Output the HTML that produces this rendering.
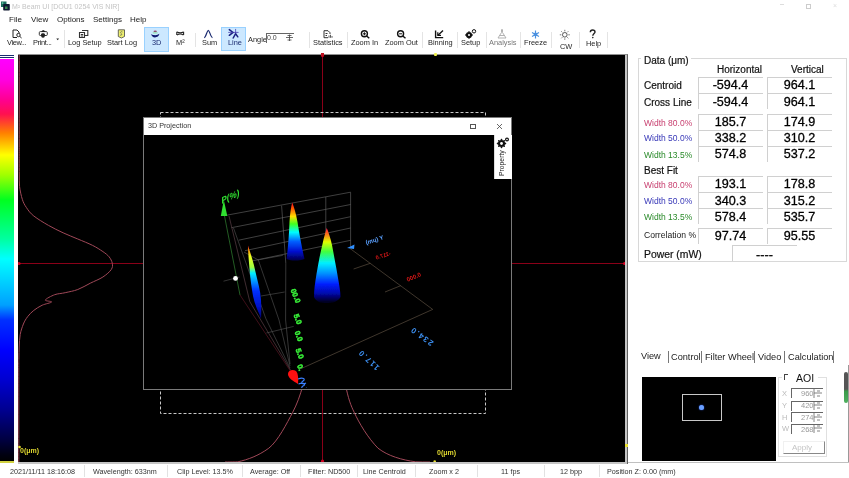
<!DOCTYPE html>
<html><head><meta charset="utf-8">
<style>
*{margin:0;padding:0;box-sizing:border-box}
html,body{width:849px;height:478px;overflow:hidden;background:#fff;font-family:"Liberation Sans",sans-serif;position:relative;color:#222}
.a{position:absolute;white-space:nowrap;line-height:1}
body>div{will-change:transform}
.tb{font-size:7.4px;color:#1e1e1e}
.sep{position:absolute;width:1px;background:#e4e4e4}
.mn{font-size:8px;color:#222;top:15.5px}
.sb{font-size:7.2px;color:#333;top:467.5px}
.ssep{position:absolute;top:465px;width:1px;height:12px;background:#e2e2e2}
.rl{font-size:10px;color:#111;-webkit-text-stroke:0.2px #111}
.cell{position:absolute;border-top:1px solid #d0d0d0;border-left:1px solid #d0d0d0;height:16px}
.val{font-size:12.6px;color:#000;-webkit-text-stroke:0.3px #000}
</style></head><body>

<!-- title bar -->
<svg class="a" style="left:0;top:0" width="12" height="12" viewBox="0 0 12 12">
 <rect x="1" y="1.5" width="5.5" height="5.5" fill="#1a6a5a"/><rect x="1.8" y="2.3" width="1.5" height="1.5" fill="#6ad0b0"/><rect x="4" y="4.5" width="1.5" height="1.5" fill="#6ad0b0"/>
 <rect x="3.2" y="4" width="6.6" height="6.5" rx="0.8" fill="#101830"/><rect x="5" y="6.5" width="2.5" height="2.5" fill="#3a8a50"/>
</svg>
<div class="a" style="left:12px;top:3px;font-size:7px;color:#c4c4c4">M² Beam UI  [DOU1 0254 VIS NIR]</div>
<div class="a" style="left:780px;top:4px;width:4px;height:1px;background:#ddd"></div>
<div class="a" style="left:806px;top:4px;width:5px;height:5px;border:1px solid #ccc"></div>
<div class="a" style="left:833px;top:2px;font-size:7px;color:#ddd">×</div>

<!-- menu -->
<div class="a mn" style="left:9px">File</div>
<div class="a mn" style="left:30.5px">View</div>
<div class="a mn" style="left:56.5px">Options</div>
<div class="a mn" style="left:93px">Settings</div>
<div class="a mn" style="left:129.5px">Help</div>

<!-- toolbar -->
<div class="a" style="left:143.5px;top:27px;width:24.5px;height:25px;background:#cce8ff;border:1px solid #99d1ff"></div>
<div class="a" style="left:221.2px;top:27.3px;width:24.8px;height:24px;background:#cce8ff;border:1px solid #99d1ff"></div>

<div class="a tb" style="left:7px;top:39.2px;letter-spacing:-0.35px">View...</div>
<div class="a tb" style="left:33.4px;top:39.2px;letter-spacing:-0.35px">Print...</div>
<div class="a tb" style="left:67.7px;top:39.2px">Log Setup</div>
<div class="a tb" style="left:106.7px;top:39.2px">Start Log</div>
<div class="a tb" style="left:151.6px;top:39.2px;color:#1a2a70">3D</div>
<div class="a tb" style="left:176px;top:39.2px">M²</div>
<div class="a tb" style="left:202px;top:39.2px">Sum</div>
<div class="a tb" style="left:227.8px;top:39.2px;color:#1a2a70">Line</div>
<div class="a tb" style="left:248.4px;top:36px">Angle</div>
<div class="a tb" style="left:313.4px;top:39.2px">Statistics</div>
<div class="a tb" style="left:351px;top:39.2px">Zoom In</div>
<div class="a tb" style="left:384.6px;top:39.2px">Zoom Out</div>
<div class="a tb" style="left:427.6px;top:39.2px">Binning</div>
<div class="a tb" style="left:461px;top:39.2px">Setup</div>
<div class="a tb" style="left:489px;top:39.2px;color:#777">Analysis</div>
<div class="a tb" style="left:524.4px;top:39.2px">Freeze</div>
<div class="a tb" style="left:559.6px;top:43px">CW</div>
<div class="a tb" style="left:586px;top:40px">Help</div>

<div class="sep" style="left:63.5px;top:30px;height:18px"></div>
<div class="sep" style="left:194.8px;top:33px;height:14px"></div>
<div class="sep" style="left:308.6px;top:32px;height:16px"></div>
<div class="sep" style="left:346.5px;top:32px;height:16px"></div>
<div class="sep" style="left:421.6px;top:32px;height:16px"></div>
<div class="sep" style="left:456.9px;top:32px;height:16px"></div>
<div class="sep" style="left:485.7px;top:32px;height:16px"></div>
<div class="sep" style="left:520px;top:32px;height:16px"></div>
<div class="sep" style="left:551px;top:32px;height:16px"></div>
<div class="sep" style="left:579.4px;top:32px;height:16px"></div>
<div class="sep" style="left:607.3px;top:32px;height:16px"></div>

<!-- angle spinbox -->
<div class="a" style="left:265.8px;top:33px;width:28px;height:9.5px;border-top:1px solid #666;border-left:1px solid #666;background:#fff"></div>
<div class="a" style="left:267.4px;top:34px;font-size:7px;color:#444">0.0</div>

<!-- TOOLBAR ICONS -->
<svg class="a" style="left:0;top:26px" width="620" height="16" viewBox="0 26 620 16">
 <!-- view: doc + magnifier -->
 <g fill="none" stroke="#222" stroke-width="1">
  <path d="M13,30 H17 L19,32 V33.5 M13,30 V37.5 H17"/>
  <circle cx="18.5" cy="35" r="1.7"/><path d="M19.7,36.3 L21.6,38"/>
 </g>
 <!-- print -->
 <rect x="39.3" y="31.6" width="8" height="3.9" rx="1" fill="none" stroke="#333" stroke-width="1"/>
 <path d="M41.5,31.8 C41.7,29.6 44.9,29.6 45.1,31.8 Z" fill="#111"/>
 <path d="M41,34.2 C41.5,33 44.5,33 45,34.2 L44.6,37 C44,38 42,38 41.4,37 Z" fill="#222"/>
 <path d="M56.3,38.6 H59.1 L57.7,40.2 Z" fill="#222"/>
 <!-- log setup -->
 <g fill="none" stroke="#333" stroke-width="1.1">
  <path d="M79.5,32.5 H84.5 V37.5 H79.5 Z"/><path d="M82,30.5 H87.8 V35.5 H84.5"/>
  <path d="M80.8,34.5 H83.2 M80.8,36 H83.2"/>
 </g>
 <!-- start log -->
 <path d="M118.3,29.8 H124.5 V36.5 L121.4,38 L118.3,36.5 Z" fill="#eef070" stroke="#444" stroke-width="0.8"/>
 <path d="M122.5,32 C121,31 119.8,32.5 121,33.4 C122.4,34.3 121.5,36 120,35" fill="none" stroke="#555" stroke-width="0.7"/>
 <!-- 3D -->
 <ellipse cx="155.2" cy="31.3" rx="1.7" ry="0.9" fill="#905070"/>
 <path d="M152.6,32.3 H157.8 L157.3,33.6 H153.1 Z" fill="#90e0b0"/>
 <path d="M151.2,34 C153,35.6 157.5,35.6 159.4,33.8 C159.2,36 157,37.4 155,37.4 C153,37.4 151.5,36.2 151.2,34 Z" fill="#101a70"/>
 <!-- M2 -->
 <g fill="none" stroke="#222" stroke-width="1.1"><path d="M176.8,31.8 V35 M183.6,31.8 V35"/><path d="M177,31.9 C179,33 181.4,33 183.4,31.9 M177,34.9 C179,33.8 181.4,33.8 183.4,34.9"/></g>
 <!-- sum -->
 <path d="M204.2,37.6 C206,37.4 207,30.3 208.3,30.3 C209.6,30.3 210.6,37.4 212.5,37.6" fill="none" stroke="#1a2a70" stroke-width="1.2"/>
 <!-- line -->
 <g fill="none" stroke="#1a2080" stroke-linecap="round">
  <path d="M229.3,29.6 L233,32.4 L229.3,35.3" stroke-width="1.5"/>
  <path d="M233.2,38 L235.6,33.6 L237.8,36.8" stroke-width="1.5"/>
  <path d="M228.6,32.4 H238.2 M235.6,29.3 V33.2" stroke-width="0.8" stroke="#4a40b0"/>
 </g>
 <!-- angle spin arrows -->
 <g stroke="#444" stroke-width="0.8" fill="none"><path d="M286,37.5 H293 M289.5,34.5 V41 M287.5,35.5 H291.5 M287.5,40 H291.5"/></g>
 <!-- statistics -->
 <g fill="none" stroke="#333" stroke-width="1">
  <path d="M324,30.7 H328 L330,32.7 V34 M324,30.7 V37.7 H328"/><path d="M325.5,33.5 H327.5 M325.5,35.5 H327"/>
  <path d="M329,35.5 V37.8 M330.5,34.8 V37.8 M332,36 V37.8" stroke-width="0.8"/>
 </g>
 <!-- zoom in / out -->
 <g fill="none" stroke="#111" stroke-width="1.4">
  <circle cx="364.4" cy="33.8" r="3"/><path d="M366.6,36 L369.3,38.3"/>
  <path d="M362.9,33.8 H365.9 M364.4,32.3 V35.3" stroke-width="1"/>
  <circle cx="400.6" cy="33.8" r="3"/><path d="M402.8,36 L405.5,38.3"/>
  <path d="M399.1,33.8 H402.1" stroke-width="1"/>
 </g>
 <!-- binning -->
 <g fill="none" stroke="#111" stroke-width="1.4">
  <path d="M435.6,30.5 V37.6 H443.2"/><path d="M438,35.2 L443,30.6"/><path d="M437.8,32.2 V35.4 H441" stroke-width="1.2"/>
 </g>
 <!-- setup gears -->
 <circle cx="469" cy="35" r="3.1" fill="#111"/><circle cx="469" cy="35" r="1" fill="#fff"/>
 <g fill="#111"><path d="M469,30.9 L470,32 H468 Z M469,39.1 L470,38 H468 Z M464.9,35 L466,34 V36 Z M473.1,35 L472,34 V36 Z"/></g>
 <circle cx="474" cy="31.3" r="1.7" fill="none" stroke="#111" stroke-width="1"/>
 <!-- analysis -->
 <g fill="none" stroke="#aaa" stroke-width="0.9"><path d="M501,29.8 H503 M501.5,30 V32.5 L498,38 H506 L502.5,32.5 V30"/><path d="M499.5,35.5 H504.5"/></g>
 <!-- freeze snowflake -->
 <g stroke="#4a90e0" stroke-width="1.2"><path d="M535.5,30.4 V38.4 M532,32.4 L539,36.4 M539,32.4 L532,36.4"/></g>
 <circle cx="535.5" cy="34.4" r="1.8" fill="#4a90e0"/>
 <!-- CW sun -->
 <circle cx="564.8" cy="34.8" r="2.3" fill="none" stroke="#444" stroke-width="0.9"/>
 <g stroke="#555" stroke-width="0.8"><path d="M564.8,29.8 V31.3 M564.8,38.3 V39.8 M559.8,34.8 H561.3 M568.3,34.8 H569.8 M561.3,31.3 L562.3,32.3 M567.3,37.3 L568.3,38.3 M568.3,31.3 L567.3,32.3 M562.3,37.3 L561.3,38.3"/></g>
 <!-- help ? -->
 <path d="M590.3,32.2 C590.3,30.6 591.5,30 592.6,30 C593.8,30 595,30.7 595,32 C595,33.4 592.8,33.8 592.8,35.8" fill="none" stroke="#222" stroke-width="1.4"/>
 <circle cx="592.8" cy="37.6" r="0.8" fill="#222"/>
</svg>

<!-- colour bar -->
<div class="a" style="left:0;top:55px;width:14px;height:1px;background:#1a2a70"></div>
<div class="a" style="left:0;top:57px;width:14px;height:1px;background:#1a2a70"></div>
<div class="a" style="left:0;top:59px;width:14px;height:403px;background:linear-gradient(to bottom,#ff00ff 0px,#ff00e0 21px,#ff0090 41px,#ff1050 55px,#ff8000 74px,#ffff00 96px,#a0ff00 116px,#00ff20 141px,#00ffa0 180px,#00ffff 200px,#00a0ff 246px,#0030ff 261px,#0000ff 291px,#0000d0 321px,#000090 351px,#000040 381px,#000010 396px,#000 403px)"></div>
<div class="a" style="left:0;top:461px;width:14px;height:2px;background:#d0d040"></div>

<!-- main view -->
<div class="a" style="left:18px;top:54px;width:610px;height:411px;background:#c4c4c4;border-right:1px solid #606060;border-bottom:1px solid #707070;border-top:1px solid #909090"></div>
<div class="a" style="left:18px;top:55px;width:607px;height:407px;background:#000;overflow:hidden">
<svg width="607" height="407" viewBox="18 55 607 407" style="position:absolute;left:0;top:0">
  <!-- crosshair -->
  <line x1="18" y1="263.5" x2="625" y2="263.5" stroke="#8a0018" stroke-width="1"/>
  <line x1="322.5" y1="55" x2="322.5" y2="462" stroke="#8a0018" stroke-width="1"/>
  <!-- dashed rect -->
  <rect x="160.5" y="112.5" width="325" height="301" fill="none" stroke="#c8c8c8" stroke-width="1" stroke-dasharray="3,2"/>
  <!-- vertical profile -->
  <path d="M19.2,55.0 C19.2,60.0 19.2,75.0 19.2,85.0 C19.2,95.0 19.2,105.0 19.2,115.0 C19.2,125.0 19.2,137.5 19.2,145.0 C19.2,152.5 19.2,155.0 19.2,160.0 C19.2,165.0 19.2,170.6 19.3,175.0 C19.4,179.4 19.1,182.6 19.6,186.7 C20.1,190.8 21.2,195.8 22.3,199.3 C23.4,202.8 24.6,204.9 26.5,207.7 C28.4,210.5 30.1,213.1 33.8,216.0 C37.5,218.9 43.6,222.6 48.5,225.4 C53.4,228.2 58.2,230.5 63.1,232.8 C68.0,235.1 72.9,236.9 77.8,239.0 C82.7,241.1 88.2,243.2 92.4,245.3 C96.6,247.4 100.1,249.7 102.9,251.6 C105.7,253.5 107.5,254.9 109.1,256.8 C110.7,258.8 111.9,261.2 112.3,263.3 C112.7,265.4 112.8,267.3 111.2,269.6 C109.6,271.9 106.4,274.7 102.9,277.0 C99.4,279.3 94.5,281.1 90.3,283.2 C86.1,285.3 82.0,287.9 77.8,289.5 C73.6,291.1 69.0,291.8 65.2,292.7 C61.4,293.6 58.0,293.5 54.7,294.7 C51.4,295.9 45.8,298.8 45.3,300.0 C44.8,301.2 52.1,301.1 51.6,302.0 C51.1,302.9 45.2,303.8 42.2,305.2 C39.2,306.6 36.2,308.5 33.8,310.4 C31.4,312.3 29.3,314.4 27.6,316.7 C25.9,319.0 24.6,321.0 23.4,324.0 C22.2,327.0 20.9,330.7 20.2,334.5 C19.5,338.3 19.4,343.1 19.2,347.0 C19.0,350.9 19.0,354.2 18.9,358.0 C18.8,361.8 18.8,363.0 18.8,370.0 C18.8,377.0 18.8,390.0 18.8,400.0 C18.8,410.0 18.8,419.7 18.8,430.0 C18.8,440.3 18.8,456.7 18.8,462.0" fill="none" stroke="#a04858" stroke-width="1"/>
  <!-- horizontal profile -->
  <path d="M225,462 C232,462 238,461.8 238,461.8 C248,459.5 258,456 268.8,448.2 C278,441 287,423 292.7,412.3 C297,404 300,396 303,385 M345.6,385 C348,398 351,406 354.2,412.3 C359,423 368,438 378,448.2 C388,456 402,460 415.7,461.8 C420,462 425,462 430,462" fill="none" stroke="#a04858" stroke-width="1"/>
  <circle cx="19" cy="263.5" r="1.6" fill="#d00020"/>
  <circle cx="322.5" cy="461" r="1.6" fill="#d00020"/>
  <circle cx="322.5" cy="55.5" r="1.6" fill="#d00020"/>
  <circle cx="624.5" cy="263.5" r="1.6" fill="#d00020"/>
  <text x="20" y="452.5" font-size="7" font-weight="bold" fill="#e0d830" font-family="Liberation Sans">0(μm)</text>
  <text x="437" y="455" font-size="7" font-weight="bold" fill="#e0d830" font-family="Liberation Sans">0(μm)</text>
  <circle cx="19.5" cy="447" r="1.3" fill="#e8e030"/>
  <circle cx="434.7" cy="461.5" r="1.3" fill="#e8e030"/>
</svg>
</div>
<div class="a" style="left:625px;top:444px;width:2.5px;height:2.5px;background:#e8e030"></div>
<div class="a" style="left:433.5px;top:53px;width:2.5px;height:2.5px;background:#f0f050;border-radius:1px"></div>
<div class="a" style="left:321px;top:53px;width:3px;height:2.5px;background:#c01020"></div>
<!-- 3D projection window -->
<div class="a" style="left:143px;top:117px;width:369px;height:273px;background:#000;border:1px solid #7a7a7a">
  <div class="a" style="left:0;top:0;width:367px;height:16.5px;background:#fff"></div>
  <div class="a" style="left:4px;top:4px;font-size:7.2px;color:#333">3D Projection</div>
  <div class="a" style="left:326px;top:5.5px;width:5.5px;height:5.5px;border:1px solid #555"></div>
  <svg class="a" style="left:351.5px;top:4.5px" width="7" height="7" viewBox="0 0 7 7"><path d="M1,1 L6,6 M6,1 L1,6" stroke="#444" stroke-width="0.8"/></svg>
  <div class="a" style="left:349.5px;top:16.5px;width:18px;height:44.5px;background:#fff;border-left:1px solid #ddd"></div>
  <svg class="a" style="left:352px;top:19px" width="14" height="12" viewBox="0 0 14 12">
   <g fill="#111"><circle cx="5.5" cy="6.5" r="3.6"/>
   <path d="M5.5,1.5 L6.7,3 L4.3,3 Z M5.5,11.5 L6.7,10 L4.3,10 Z M0.5,6.5 L2,5.3 L2,7.7 Z M10.5,6.5 L9,5.3 L9,7.7 Z M2,3 L3.8,3.3 L2.3,4.8 Z M9,3 L7.2,3.3 L8.7,4.8 Z M2,10 L3.8,9.7 L2.3,8.2 Z M9,10 L7.2,9.7 L8.7,8.2 Z"/></g>
   <circle cx="5.5" cy="6.5" r="1.4" fill="#fff"/>
   <circle cx="11" cy="2.5" r="2" fill="#111"/><circle cx="11" cy="2.5" r="0.8" fill="#fff"/>
  </svg>
  <div class="a" style="left:354.5px;top:58px;font-size:6.8px;color:#222;transform:rotate(-90deg);transform-origin:0 0">Property</div>
</div>
<svg class="a" style="left:144px;top:135px" width="367" height="253" viewBox="144 135 367 253">
 <defs>
  <linearGradient id="pk1" x1="0" y1="202" x2="0" y2="260" gradientUnits="userSpaceOnUse">
   <stop offset="0" stop-color="#ff0020"/><stop offset="0.12" stop-color="#ff6000"/><stop offset="0.25" stop-color="#ffe000"/>
   <stop offset="0.38" stop-color="#40ff20"/><stop offset="0.52" stop-color="#00ffff"/><stop offset="0.68" stop-color="#0060ff"/>
   <stop offset="0.85" stop-color="#0010d0"/><stop offset="1" stop-color="#000050"/>
  </linearGradient>
  <linearGradient id="pk2" x1="0" y1="227" x2="0" y2="302" gradientUnits="userSpaceOnUse">
   <stop offset="0" stop-color="#ff1060"/><stop offset="0.07" stop-color="#ff5020"/><stop offset="0.2" stop-color="#e0ff00"/>
   <stop offset="0.33" stop-color="#40ff40"/><stop offset="0.48" stop-color="#00f0ff"/><stop offset="0.62" stop-color="#0090ff"/>
   <stop offset="0.76" stop-color="#0020ff"/><stop offset="0.88" stop-color="#0008b0"/><stop offset="1" stop-color="#000020"/>
  </linearGradient>
  <linearGradient id="pk3" x1="0" y1="245" x2="0" y2="319" gradientUnits="userSpaceOnUse">
   <stop offset="0" stop-color="#ff0040"/><stop offset="0.06" stop-color="#ff8000"/><stop offset="0.15" stop-color="#f0ff20"/>
   <stop offset="0.3" stop-color="#a0ff40"/><stop offset="0.38" stop-color="#00f0ff"/><stop offset="0.5" stop-color="#0090ff"/>
   <stop offset="0.62" stop-color="#0030ff"/><stop offset="0.85" stop-color="#0010c0"/><stop offset="1" stop-color="#000060"/>
  </linearGradient>
 <filter id="bl" x="-20%" y="-20%" width="140%" height="140%"><feGaussianBlur stdDeviation="0.5"/></filter>
 </defs>
 <!-- back wall grid -->
 <g stroke="#6a6a6a" stroke-width="0.6" fill="none">
  <path d="M227.2,215.1 L350.6,192.2 M231.4,227.7 L350.6,204.5 M238.7,240.2 L350.6,216.7 M245,250.7 L350.6,228 M251.3,261.1 L350.6,240.3"/>
  <path d="M350.6,192.2 V247 M325.8,197 V262 M281.6,205.7 L285.8,263.2"/>
 </g>
 <!-- left wall lines -->
 <g stroke-width="0.6" fill="none">
  <path d="M224.5,216 L240,295" stroke="#3a9a3a"/>
  <path d="M240,295 L291,372" stroke="#6a1a2a"/>
  <path d="M229,216 L249.8,301.6 L290.5,370" stroke="#6a4a52"/>
  <path d="M233.5,228 L265.8,318.5 L290,368" stroke="#555"/>
  <path d="M244,252 L258.3,260 L279,320 L290,366" stroke="#555"/>
  <path d="M285.8,263.2 L285.6,320 L290,364" stroke="#5a5a5a"/>
  <path d="M223.5,281.2 L239.5,277 M257.4,260 L282.8,255.4 M261,296 L284.7,292 M266.4,333 L293.7,326.4" stroke="#555"/>
 </g>
 <!-- floor -->
 <g stroke="#6a5a4a" stroke-width="0.6" fill="none">
  <path d="M300.7,368.8 L432.7,309.4 L349.4,248"/>
  <path d="M353.6,269 L370.3,263.3 M385,292 L400.7,285.7"/>
 </g>
 <!-- peaks -->
 <path d="M248,245.5 C251,255 253.5,262 255.5,272 C257.5,281 260.5,290 261,300 C261.5,308 261.3,314 261,319 C258.5,312 254.5,304 253,296 C251.5,287 250.5,280 249.8,272 C249,262 248,252 248,245.5 Z" fill="url(#pk3)" filter="url(#bl)"/>
 <path d="M292.2,202.6 C294,207 296,214 297.5,222 C299.5,235 302,248 304.5,259 C298,261 292,261 286.6,259 C288,248 289,235 289.5,222 C290,214 291,207 292.2,202.6 Z" fill="url(#pk1)" filter="url(#bl)"/>
 <path d="M326.7,228 C328.5,232 330.5,238 332,245 C334,256 336,266 338,278 C339.5,286 340.5,292 340.5,297 C338,302 332,303 327,303 C321,303 316,302 314,297 C314,290 315,283 316.5,274 C318.5,262 320.5,252 322.5,244 C324,237 325.5,232 326.7,228 Z" fill="url(#pk2)" filter="url(#bl)"/>
 <!-- axes markers -->
 <path d="M223.8,200 L227.3,216 L220.8,216 Z" fill="#30e030"/>
 <text x="0" y="0" font-size="9.5" font-weight="bold" fill="#30e030" font-family="Liberation Sans" transform="translate(221.5,204) skewY(-25) scale(0.85,1)">P(%)</text>
 <circle cx="235.5" cy="278.4" r="2.4" fill="#fff"/>
 <path d="M347,248 L354.5,244.5 L354,249 Z" fill="#3090ff"/>
 <text x="0" y="0" font-size="6" font-weight="bold" fill="#5aa0ff" font-family="Liberation Sans" transform="translate(384,239) rotate(162) scale(1,-1)">Y (μm)</text>
 <text x="0" y="0" font-size="5.5" font-weight="bold" fill="#e01818" font-family="Liberation Sans" transform="translate(391,255) rotate(162) scale(1,-1)">-117.0</text>
 <text x="0" y="0" font-size="6" font-weight="bold" fill="#e01818" font-family="Liberation Sans" transform="translate(421.5,276) rotate(157) scale(1,-1)">0.000</text>
 <text x="0" y="0" font-size="8" font-weight="bold" letter-spacing="1.3" fill="#3c8ff0" font-family="Liberation Sans" transform="translate(434,342) rotate(-144)">234.0</text>
 <text x="0" y="0" font-size="8" font-weight="bold" letter-spacing="1.3" fill="#3c8ff0" font-family="Liberation Sans" transform="translate(380,367) rotate(-136.5)">117.0</text>
 <g font-size="7.5" font-weight="bold" fill="#38f038" stroke="#38f038" stroke-width="0.5" font-family="Liberation Sans">
  <text transform="translate(290.5,290) rotate(68)">00.0</text>
  <text transform="translate(293.5,315) rotate(70)">5.0</text>
  <text transform="translate(294.5,332) rotate(70)">0.0</text>
  <text transform="translate(295.5,349.5) rotate(70)">5.0</text>
  <text transform="translate(297,365.5) rotate(70)">0.</text>
 </g>
 <path d="M288,374 C288,370 293,369 296,371 C298,373 298.5,378 298,384 C293,381 288,378 288,374 Z" fill="#ff1010"/>
 <path d="M298,379 C303,377 306,379 303,381 C300,383 303,385 306,383 M298.5,384 C303,382 307,384 303,386 C300,388 303,390 307,388" fill="none" stroke="#3a80ff" stroke-width="1.1"/>
</svg>


<!-- right panel -->
<!-- data group -->
<div class="a" style="left:638px;top:58.4px;width:208.5px;height:204px;border:1px solid #d8d8d8"></div>
<div class="a" style="left:641px;top:54px;width:50px;height:8px;background:#fff"></div>
<div class="a rl" style="left:643.6px;top:56.1px">Data (μm)</div>
<div class="a rl" style="left:717px;top:65.3px">Horizontal</div>
<div class="a rl" style="left:791px;top:65.3px">Vertical</div>
<div class="a" style="left:643.5px;top:81.4px;font-size:10px;color:#111;-webkit-text-stroke:0.2px #111">Centroid</div>
<div class="a" style="left:643.5px;top:97.5px;font-size:10px;color:#111;-webkit-text-stroke:0.2px #111">Cross Line</div>
<div class="a" style="left:643.5px;top:118.50px;font-size:8.5px;color:#c84070">Width 80.0%</div>
<div class="a" style="left:643.5px;top:134.30px;font-size:8.5px;color:#3838b8">Width 50.0%</div>
<div class="a" style="left:643.5px;top:150.80px;font-size:8.5px;color:#2a8a2a">Width 13.5%</div>
<div class="a" style="left:643.5px;top:165.84px;font-size:10px;color:#111;-webkit-text-stroke:0.2px #111">Best Fit</div>
<div class="a" style="left:643.5px;top:180.90px;font-size:8.5px;color:#c84070">Width 80.0%</div>
<div class="a" style="left:643.5px;top:196.80px;font-size:8.5px;color:#3838b8">Width 50.0%</div>
<div class="a" style="left:643.5px;top:213.20px;font-size:8.5px;color:#2a8a2a">Width 13.5%</div>
<div class="a" style="left:643.5px;top:230.72px;font-size:8.6px;color:#1a1a1a">Correlation %</div>
<div class="a" style="left:643.5px;top:249.90px;font-size:10.4px;color:#111;-webkit-text-stroke:0.2px #111">Power (mW)</div>
<div class="cell" style="left:697.5px;top:77.1px;width:65px"></div>
<div class="cell" style="left:767px;top:77.1px;width:65px"></div>
<div class="a val" style="left:697.5px;top:79.44px;width:65px;text-align:center">-594.4</div>
<div class="a val" style="left:767px;top:79.44px;width:65px;text-align:center">964.1</div>
<div class="cell" style="left:697.5px;top:93.4px;width:65px"></div>
<div class="cell" style="left:767px;top:93.4px;width:65px"></div>
<div class="a val" style="left:697.5px;top:95.74px;width:65px;text-align:center">-594.4</div>
<div class="a val" style="left:767px;top:95.74px;width:65px;text-align:center">964.1</div>
<div class="cell" style="left:697.5px;top:113.6px;width:65px"></div>
<div class="cell" style="left:767px;top:113.6px;width:65px"></div>
<div class="a val" style="left:697.5px;top:115.94px;width:65px;text-align:center">185.7</div>
<div class="a val" style="left:767px;top:115.94px;width:65px;text-align:center">174.9</div>
<div class="cell" style="left:697.5px;top:129.5px;width:65px"></div>
<div class="cell" style="left:767px;top:129.5px;width:65px"></div>
<div class="a val" style="left:697.5px;top:131.84px;width:65px;text-align:center">338.2</div>
<div class="a val" style="left:767px;top:131.84px;width:65px;text-align:center">310.2</div>
<div class="cell" style="left:697.5px;top:145.8px;width:65px"></div>
<div class="cell" style="left:767px;top:145.8px;width:65px"></div>
<div class="a val" style="left:697.5px;top:148.14px;width:65px;text-align:center">574.8</div>
<div class="a val" style="left:767px;top:148.14px;width:65px;text-align:center">537.2</div>
<div class="cell" style="left:697.5px;top:175.5px;width:65px"></div>
<div class="cell" style="left:767px;top:175.5px;width:65px"></div>
<div class="a val" style="left:697.5px;top:177.84px;width:65px;text-align:center">193.1</div>
<div class="a val" style="left:767px;top:177.84px;width:65px;text-align:center">178.8</div>
<div class="cell" style="left:697.5px;top:192.2px;width:65px"></div>
<div class="cell" style="left:767px;top:192.2px;width:65px"></div>
<div class="a val" style="left:697.5px;top:194.54px;width:65px;text-align:center">340.3</div>
<div class="a val" style="left:767px;top:194.54px;width:65px;text-align:center">315.2</div>
<div class="cell" style="left:697.5px;top:208.3px;width:65px"></div>
<div class="cell" style="left:767px;top:208.3px;width:65px"></div>
<div class="a val" style="left:697.5px;top:210.64px;width:65px;text-align:center">578.4</div>
<div class="a val" style="left:767px;top:210.64px;width:65px;text-align:center">535.7</div>
<div class="cell" style="left:697.5px;top:227.5px;width:65px"></div>
<div class="cell" style="left:767px;top:227.5px;width:65px"></div>
<div class="a val" style="left:697.5px;top:229.84px;width:65px;text-align:center">97.74</div>
<div class="a val" style="left:767px;top:229.84px;width:65px;text-align:center">95.55</div>
<div class="cell" style="left:731.5px;top:245px;width:65px"></div>
<div class="a val" style="left:731.5px;top:249px;width:65px;text-align:center">----</div>


<!-- tabs -->
<div class="a" style="left:641.3px;top:351.5px;font-size:9.2px;color:#222">View</div>
<div class="a" style="left:668px;top:351px;width:1px;height:12px;background:#777"></div>
<div class="a" style="left:671px;top:353px;font-size:9.2px;color:#222">Control</div>
<div class="a" style="left:701px;top:351px;width:1px;height:12px;background:#777"></div>
<div class="a" style="left:705px;top:353px;font-size:9.2px;color:#222">Filter Wheel</div>
<div class="a" style="left:754px;top:351px;width:1px;height:12px;background:#777"></div>
<div class="a" style="left:757.8px;top:353px;font-size:9.2px;color:#222">Video</div>
<div class="a" style="left:784px;top:351px;width:1px;height:12px;background:#777"></div>
<div class="a" style="left:787.5px;top:353px;font-size:9.2px;color:#222">Calculation</div>
<div class="a" style="left:833.4px;top:351px;width:1px;height:12px;background:#777"></div>
<!-- aoi preview -->
<div class="a" style="left:641.7px;top:376.5px;width:134px;height:84px;background:#000"></div>
<div class="a" style="left:682px;top:394.3px;width:39.5px;height:26.8px;border:1px solid #c8c8c8"></div>
<div class="a" style="left:699px;top:405px;width:5px;height:5px;border-radius:50%;background:#6aa0ff;box-shadow:0 0 1.5px #3060ff"></div>
<!-- aoi group -->
<div class="a" style="left:778px;top:377px;width:48.5px;height:80px;border:1px solid #e0e0e0"></div>
<div class="a" style="left:782px;top:372px;width:36px;height:10px;background:#fff"></div>
<div class="a" style="left:784.2px;top:374.4px;width:4px;height:6px;border-top:1px solid #444;border-left:1px solid #444"></div>
<div class="a" style="left:796px;top:373px;font-size:10.5px;color:#111">AOI</div>
<div class="a" style="left:782px;top:389.5px;font-size:7.5px;color:#bbb">X</div>
<div class="a" style="left:782px;top:401.5px;font-size:7.5px;color:#bbb">Y</div>
<div class="a" style="left:782px;top:413.5px;font-size:7.5px;color:#bbb">H</div>
<div class="a" style="left:781.5px;top:425px;font-size:7.5px;color:#bbb">W</div>
<div class="a" style="left:791px;top:388.4px;width:31.5px;height:10px;border-top:1px solid #666;border-left:1px solid #666"></div>
<div class="a" style="left:791px;top:400.6px;width:31.5px;height:10px;border-top:1px solid #666;border-left:1px solid #666"></div>
<div class="a" style="left:791px;top:412.3px;width:31.5px;height:10px;border-top:1px solid #666;border-left:1px solid #666"></div>
<div class="a" style="left:791px;top:424px;width:31.5px;height:10px;border-top:1px solid #666;border-left:1px solid #666"></div>
<div class="a" style="left:800.5px;top:390px;font-size:7.5px;color:#999">960</div>
<div class="a" style="left:800.5px;top:402px;font-size:7.5px;color:#999">420</div>
<div class="a" style="left:800.5px;top:414px;font-size:7.5px;color:#999">274</div>
<div class="a" style="left:800.5px;top:425.5px;font-size:7.5px;color:#999">268</div>
<svg class="a" style="left:812px;top:388px" width="12" height="48" viewBox="0 0 12 48">
 <g stroke="#666" stroke-width="0.8" fill="none">
  <path d="M2,1 V10 M2,5 H10 M5,3 H8 M5,8 H8"/>
  <path d="M2,13 V22 M2,17 H10 M5,15 H8 M5,20 H8"/>
  <path d="M2,25 V34 M2,29 H10 M5,27 H8 M5,32 H8"/>
  <path d="M2,36 V45 M2,40 H10 M5,38 H8 M5,43 H8"/>
 </g>
</svg>
<div class="a" style="left:782.5px;top:441.4px;width:41.5px;height:13px;border-right:1px solid #888;border-bottom:1px solid #888;border-top:1px solid #f0f0f0;border-left:1px solid #f0f0f0"></div>
<div class="a" style="left:792px;top:444px;font-size:8px;color:#c4c4c4">Apply</div>
<!-- scrollbar -->
<div class="a" style="left:848px;top:365px;width:1px;height:97px;background:#999"></div>
<div class="a" style="left:843.6px;top:372px;width:3.8px;height:31px;border-radius:2px;background:linear-gradient(to bottom,#555 0,#555 55%,#3a9a4a 62%,#50b060 100%)"></div>
<div class="a" style="left:628px;top:462px;width:221px;height:1px;background:#c0c0c0"></div>

<!-- status bar -->
<div class="a" style="left:0;top:464px;width:849px;height:14px;background:#fff"></div>
<div class="a sb" style="left:9.6px">2021/11/11 18:16:08</div>
<div class="ssep" style="left:84px"></div>
<div class="a sb" style="left:93px">Wavelength: 633nm</div>
<div class="ssep" style="left:167px"></div>
<div class="a sb" style="left:177px">Clip Level: 13.5%</div>
<div class="ssep" style="left:241.6px"></div>
<div class="a sb" style="left:249.7px">Average: Off</div>
<div class="ssep" style="left:300px"></div>
<div class="a sb" style="left:308px">Filter: ND500</div>
<div class="ssep" style="left:357px"></div>
<div class="a sb" style="left:363px">Line Centroid</div>
<div class="ssep" style="left:415px"></div>
<div class="a sb" style="left:429px">Zoom x 2</div>
<div class="ssep" style="left:477px"></div>
<div class="a sb" style="left:500.8px">11 fps</div>
<div class="ssep" style="left:543.8px"></div>
<div class="a sb" style="left:560px">12 bpp</div>
<div class="ssep" style="left:599.4px"></div>
<div class="a sb" style="left:607px">Position Z: 0.00 (mm)</div>

</body></html>
